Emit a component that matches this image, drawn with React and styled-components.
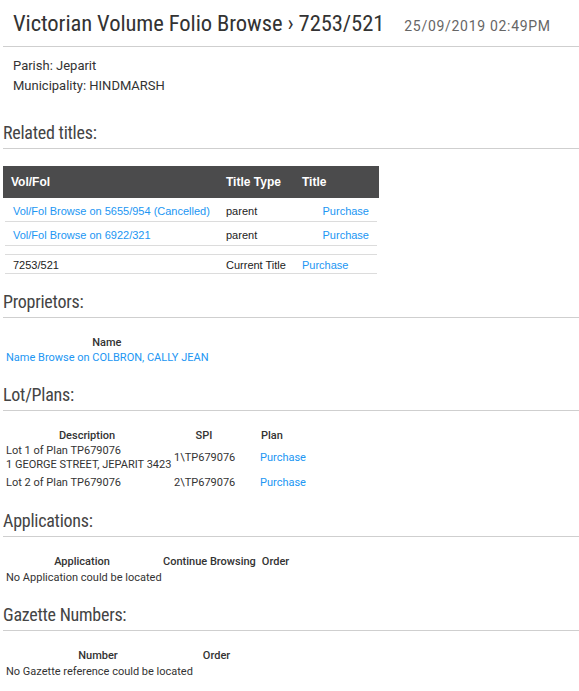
import React from "react";
import styled, { createGlobalStyle } from "styled-components";

const GlobalStyle = createGlobalStyle`
  html, body {
    margin: 0;
    padding: 0;
    background: #ffffff;
  }
  body {
    font-family: Roboto, "Noto Sans", sans-serif;
    color: #333333;
  }
`;

const Page = styled.div`
  width: 579px;
  padding: 0 0 24px 3px;
  box-sizing: border-box;
`;

const TitleBar = styled.header`
  display: flex;
  align-items: baseline;
  gap: 20px;
  padding: 10px 0 8px 10px;
  border-bottom: 1px solid #cfcfcf;
`;

const PageTitle = styled.h1`
  margin: 0;
  font-family: "Roboto Condensed", Roboto, sans-serif;
  font-weight: 400;
  font-size: 22.6px;
  letter-spacing: -0.1px;
  line-height: 28px;
  color: #333333;
  white-space: nowrap;
`;

const Stamp = styled.span`
  font-family: Roboto, sans-serif;
  font-size: 14px;
  letter-spacing: 0.7px;
  color: #666666;
  white-space: nowrap;
`;

const Facts = styled.div`
  padding: 9px 0 0 10px;
  font-size: 13px;
  line-height: 20px;
  color: #333333;
`;

const Section = styled.section`
  margin-top: ${(p) => p.$gap ?? 18}px;
`;

const SectionTitle = styled.h2`
  margin: 0;
  padding-bottom: 4px;
  border-bottom: 1px solid #cfcfcf;
  font-family: "Roboto Condensed", Roboto, sans-serif;
  font-weight: 400;
  font-size: 18px;
  letter-spacing: -0.25px;
  line-height: 22px;
  color: #444444;
`;

const Link = styled.a`
  color: #2196f3;
  text-decoration: none;
  cursor: pointer;
`;

/* Related titles: dark-headed list */
const TitleTable = styled.div`
  width: 376px;
  margin-top: 17px;
  font-family: "Liberation Sans", Arial, sans-serif;
`;

const TitleHead = styled.div`
  display: grid;
  grid-template-columns: 215px 76px 85px;
  height: 32px;
  align-items: center;
  background: #4b4b4c;
  color: #ffffff;
  font-size: 12px;
  font-weight: 700;
  & > span {
    padding-left: 8px;
  }
`;

const TitleRow = styled.div`
  display: grid;
  grid-template-columns: 213px 76px 1fr;
  align-items: center;
  box-sizing: border-box;
  margin: ${(p) => (p.$current ? "8px 2px 0" : "0 2px")};
  height: ${(p) => (p.$current ? 20 : 24)}px;
  padding-top: ${(p) => (p.$current ? 1 : 3)}px;
  border-top: ${(p) => (p.$current ? "1px solid #dcdcdc" : "none")};
  border-bottom: 1px solid #dcdcdc;
  font-size: 11px;
  color: #222222;
`;

const TitleCell = styled.span`
  padding: 0 8px;
  white-space: nowrap;
  justify-self: ${(p) => (p.$end ? "end" : "start")};
`;

/* Plain listing grids used by the lower sections */
const Listing = styled.div`
  display: grid;
  grid-template-columns: ${(p) => p.$cols};
  justify-content: start;
  margin-top: 17px;
  font-size: 11px;
  color: #333333;
`;

const HeadCell = styled.div`
  font-weight: 500;
  line-height: 15px;
  padding-right: 2px;
  padding-left: ${(p) => p.$indent ?? 2}px;
  text-align: ${(p) => p.$align ?? "center"};
  white-space: nowrap;
  color: #333333;
`;

const Cell = styled.div`
  line-height: 14px;
  padding: 1px 2px;
  padding-left: ${(p) => p.$indent ?? 3}px;
  margin-top: ${(p) => (p.$spaced ? 2 : 0)}px;
  align-self: center;
  white-space: nowrap;
  text-align: ${(p) => p.$align ?? "left"};
`;

const EmptyNote = styled.div`
  grid-column: 1;
  line-height: 14px;
  padding: 2px 2px 1px 3px;
  white-space: nowrap;
`;

const relatedTitles = [
  { label: "Vol/Fol Browse on 5655/954 (Cancelled)", type: "parent" },
  { label: "Vol/Fol Browse on 6922/321", type: "parent" },
];

const lots = [
  {
    lines: ["Lot 1 of Plan TP679076", "1 GEORGE STREET, JEPARIT 3423"],
    spi: "1\\TP679076",
  },
  { lines: ["Lot 2 of Plan TP679076"], spi: "2\\TP679076" },
];

export default function App() {
  return (
    <>
      <GlobalStyle />
      <Page>
        <TitleBar>
          <PageTitle>Victorian Volume Folio Browse › 7253/521</PageTitle>
          <Stamp>25/09/2019 02:49PM</Stamp>
        </TitleBar>

        <Facts>
          <div>Parish: Jeparit</div>
          <div>Municipality: HINDMARSH</div>
        </Facts>

        <Section $gap={26}>
          <SectionTitle>Related titles:</SectionTitle>
          <TitleTable>
            <TitleHead>
              <span>Vol/Fol</span>
              <span>Title Type</span>
              <span>Title</span>
            </TitleHead>
            {relatedTitles.map((t) => (
              <TitleRow key={t.label}>
                <TitleCell>
                  <Link>{t.label}</Link>
                </TitleCell>
                <TitleCell>{t.type}</TitleCell>
                <TitleCell $end>
                  <Link>Purchase</Link>
                </TitleCell>
              </TitleRow>
            ))}
            <TitleRow $current>
              <TitleCell>7253/521</TitleCell>
              <TitleCell>Current Title</TitleCell>
              <TitleCell>
                <Link>Purchase</Link>
              </TitleCell>
            </TitleRow>
          </TitleTable>
        </Section>

        <Section $gap={17}>
          <SectionTitle>Proprietors:</SectionTitle>
          <Listing $cols="auto">
            <HeadCell>Name</HeadCell>
            <Cell>
              <Link>Name Browse on COLBRON, CALLY JEAN</Link>
            </Cell>
          </Listing>
        </Section>

        <Section>
          <SectionTitle>Lot/Plans:</SectionTitle>
          <Listing $cols="168px 66px auto">
            <HeadCell>Description</HeadCell>
            <HeadCell>SPI</HeadCell>
            <HeadCell $align="left" $indent={24}>
              Plan
            </HeadCell>
            {lots.map((lot, i) => (
              <React.Fragment key={lot.spi}>
                <Cell $spaced={i > 0}>
                  {lot.lines.map((l) => (
                    <div key={l}>{l}</div>
                  ))}
                </Cell>
                <Cell $spaced={i > 0} $align="center">
                  {lot.spi}
                </Cell>
                <Cell $spaced={i > 0} $indent={23}>
                  <Link>Purchase</Link>
                </Cell>
              </React.Fragment>
            ))}
          </Listing>
        </Section>

        <Section $gap={19}>
          <SectionTitle>Applications:</SectionTitle>
          <Listing $cols="158px auto auto">
            <HeadCell>Application</HeadCell>
            <HeadCell>Continue Browsing</HeadCell>
            <HeadCell $indent={4}>Order</HeadCell>
            <EmptyNote>No Application could be located</EmptyNote>
          </Listing>
        </Section>

        <Section>
          <SectionTitle>Gazette Numbers:</SectionTitle>
          <Listing $cols="190px 47px">
            <HeadCell>Number</HeadCell>
            <HeadCell>Order</HeadCell>
            <EmptyNote>No Gazette reference could be located</EmptyNote>
          </Listing>
        </Section>
      </Page>
    </>
  );
}
